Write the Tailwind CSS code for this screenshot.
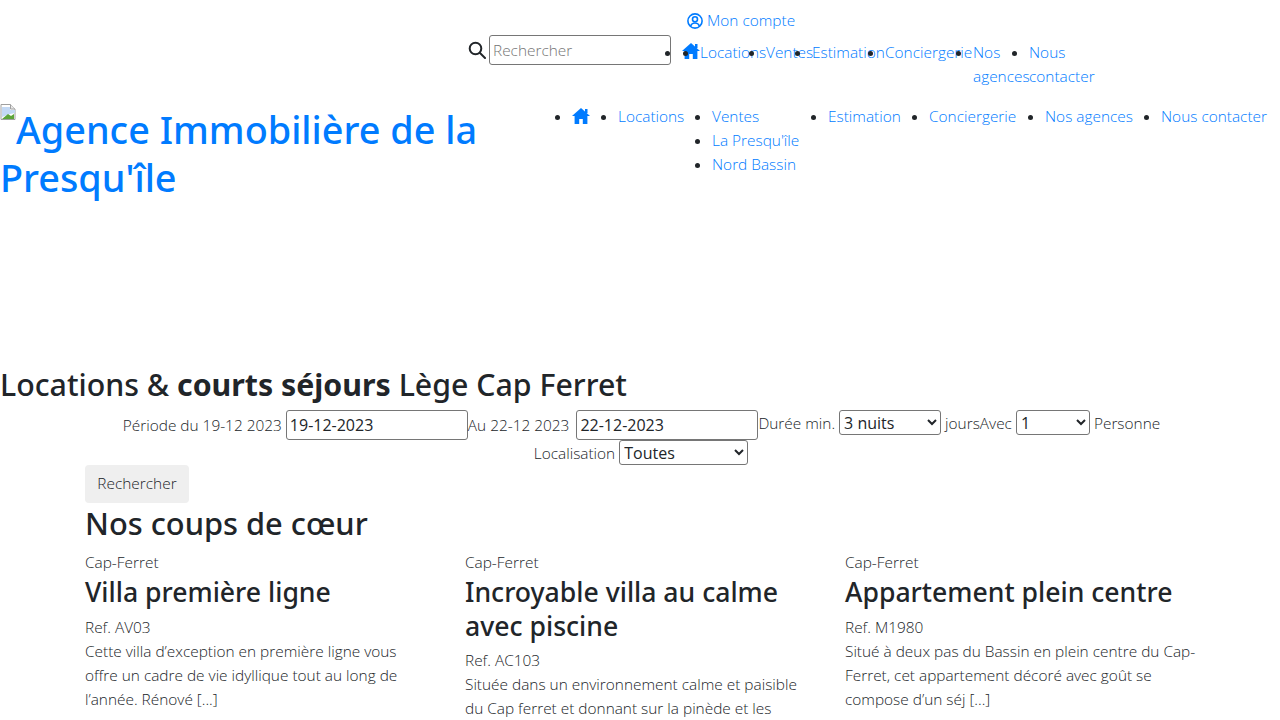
<!DOCTYPE html>
<html lang="fr">
<head>
    <meta charset="UTF-8">
    <meta name="viewport" content="width=device-width, initial-scale=1.0">
    <title>Agence Immobilière de la Presqu'île</title>
    <script src="https://cdn.jsdelivr.net/npm/@tailwindcss/browser@4"></script>
</head>
<body class="bg-white text-[#212529] text-[15.4px] leading-6 font-light font-['Open_Sans',sans-serif]">
    <header class="h-[104px] pl-[468px] pt-2">
        <div class="pl-[219px] h-6 pt-[1px]">
            <a href="#" class="flex items-center gap-1 text-[#007bff]">
                <svg class="w-4 h-4" viewBox="0 0 16 16" fill="none" stroke="currentColor" stroke-width="1.6"><circle cx="8" cy="8" r="7.1"/><circle cx="8" cy="6.300" r="2.500"/><path d="M3.600 13c.8-2.200 2.400-3 4.400-3s3.600.8 4.400 3"/></svg>
                Mon compte
            </a>
        </div>
        <div class="flex items-start mt-[3px]">
            <svg class="w-[18px] h-[18px] mt-[6px] mr-[3px] shrink-0" viewBox="0 0 18 18" fill="none" stroke="#212529" stroke-width="2"><circle cx="7.500" cy="7.500" r="5.800"/><path d="M12 12l5 5" stroke-linecap="round"/></svg>
            <input type="text" placeholder="Rechercher" class="w-[182px] h-[30px] px-[3px] border border-[#767676] rounded-[3px] placeholder:text-[#757575]">
            <ul class="flex w-[411px] ml-[11px] list-disc text-[#007bff] marker:text-[#212529] mt-[6px]">
                <li class="shrink-0 w-[18px] pt-[2px]"><svg class="w-[18px] h-[16px]" viewBox="0 0 18 16" fill="currentColor"><path d="M9 0L0 8h2.600v8h4.600v-5h3.600v5h4.600V8H18z"/><path d="M13 1h2.500v4H13z"/></svg></li>
                <li class="w-[66px] shrink-0"><a href="#">Locations</a></li>
                <li class="w-[46px] shrink-0"><a href="#">Ventes</a></li>
                <li class="w-[73px] shrink-0"><a href="#">Estimation</a></li>
                <li class="w-[88px] shrink-0"><a href="#">Conciergerie</a></li>
                <li class="w-[56px] shrink-0"><a href="#">Nos agences</a></li>
                <li class="w-[64px] shrink-0"><a href="#">Nous contacter</a></li>
            </ul>
        </div>
    </header>

    <div class="flex h-[256px]">
        <a href="#" class="block w-[512px] shrink-0 text-[37.8px] leading-[48px] font-medium font-['Noto_Sans',sans-serif] text-[#007bff] pt-[2px]">
            <svg class="inline-block align-top -mt-[2px] w-4 h-4" viewBox="0 0 16 16"><path d="M1 .5h9.500L15 5v10.500H1z" fill="#fff" stroke="#a0a0a0"/><path d="M10.500.5V5H15" fill="#e8e8e8" stroke="#a0a0a0"/><path d="M2 3h8v3l5 0v3l-5 1-8 3z" fill="#c3d9f5"/><path d="M2 15l6-5 3 2 3-2v5z" fill="#5ca53a"/></svg><span>Agence Immobilière de la Presqu'île</span>
        </a>
        <ul class="flex gap-[28px] pl-[60px] pt-[1px] list-disc whitespace-nowrap text-[#007bff] marker:text-[#212529]">
            <li class="w-[18px] pt-[3px]"><svg class="w-[18px] h-4" viewBox="0 0 18 16" fill="currentColor"><path d="M9 0L0 8h2.600v8h4.600v-5h3.600v5h4.600V8H18z"/><path d="M13 1h2.500v4H13z"/></svg></li>
            <li class="w-[66px]"><a href="#">Locations</a></li>
            <li class="w-[88px]">
                <a href="#">Ventes</a>
                <ul class="list-disc">
                    <li><a href="#">La Presqu'île</a></li>
                    <li><a href="#">Nord Bassin</a></li>
                </ul>
            </li>
            <li class="w-[73px]"><a href="#">Estimation</a></li>
            <li class="w-[88px]"><a href="#">Conciergerie</a></li>
            <li class="w-[88px]"><a href="#">Nos agences</a></li>
            <li><a href="#">Nous contacter</a></li>
        </ul>
    </div>

    <main>
        <h1 class="text-[30.3px] leading-[48px] pt-[1px] mb-[1px] font-medium font-['Noto_Sans',sans-serif]">Locations &amp; <strong class="font-bold">courts séjours</strong> Lège Cap Ferret</h1>
        <form class="mx-auto w-[1140px]">
            <div class="flex justify-center items-start h-[30px] pl-[3px]">
                <div>
                    <label>Période du 19-12 2023</label>
                    <input type="text" value="19-12-2023" class="w-[182px] h-[30px] px-[3px] border border-[#767676] rounded-[3px] text-base font-normal">
                </div>
                <div>
                    <label class="mr-[3px]">Au 22-12 2023</label>
                    <input type="text" value="22-12-2023" class="w-[182px] h-[30px] px-[3px] border border-[#767676] rounded-[3px] text-base font-normal">
                </div>
                <div>
                    <label>Durée min.</label>
                    <select class="w-[102px] h-[25px] border border-[#767676] rounded-[3px] bg-white text-base font-normal"><option>3 nuits</option></select>
                    <span>jours</span>
                </div>
                <div>
                    <label>Avec</label>
                    <select class="w-[74px] h-[25px] border border-[#767676] rounded-[3px] bg-white text-base font-normal"><option>1</option></select>
                    <span>Personne</span>
                </div>
            </div>
            <div class="flex justify-center h-[25px] pl-[2px]">
                <div>
                    <label>Localisation</label>
                    <select class="w-[129px] h-[25px] border border-[#767676] rounded-[3px] bg-white text-base font-normal"><option>Toutes</option></select>
                </div>
            </div>
        </form>
        <div class="w-[1140px] mx-auto px-[15px]">
            <button type="button" class="block w-[104px] h-[38px] bg-[#efefef] rounded-[4px]">Rechercher</button>
            <h2 class="text-[30.8px] leading-[40px] mb-[2px] font-medium font-['Noto_Sans',sans-serif]">Nos coups de cœur</h2>
        </div>
        <div class="w-[1140px] mx-auto grid grid-cols-3 mt-[8px] h-[169px] overflow-hidden">
            <article class="px-[15px]">
                <p>Cap-Ferret</p>
                <h3 class="text-[26.6px] leading-[33.6px] pt-[1px] mb-[6px] font-medium font-['Noto_Sans',sans-serif]">Villa première ligne</h3>
                <p>Ref. AV03</p>
                <p class="whitespace-nowrap">Cette villa d’exception en première ligne vous<br>offre un cadre de vie idyllique tout au long de<br>l’année. Rénové [...]</p>
            </article>
            <article class="px-[15px]">
                <p>Cap-Ferret</p>
                <h3 class="text-[26.6px] leading-[33.6px] pt-[1px] mb-[6px] font-medium font-['Noto_Sans',sans-serif]">Incroyable villa au calme avec piscine</h3>
                <p>Ref. AC103</p>
                <p class="whitespace-nowrap">Située dans un environnement calme et paisible<br>du Cap ferret et donnant sur la pinède et les</p>
            </article>
            <article class="px-[15px]">
                <p>Cap-Ferret</p>
                <h3 class="text-[26.6px] leading-[33.6px] pt-[1px] mb-[6px] font-medium font-['Noto_Sans',sans-serif]">Appartement plein centre</h3>
                <p>Ref. M1980</p>
                <p class="whitespace-nowrap">Situé à deux pas du Bassin en plein centre du Cap-<br>Ferret, cet appartement décoré avec goût se<br>compose d’un séj [...]</p>
            </article>
        </div>
    </main>
</body>
</html>
